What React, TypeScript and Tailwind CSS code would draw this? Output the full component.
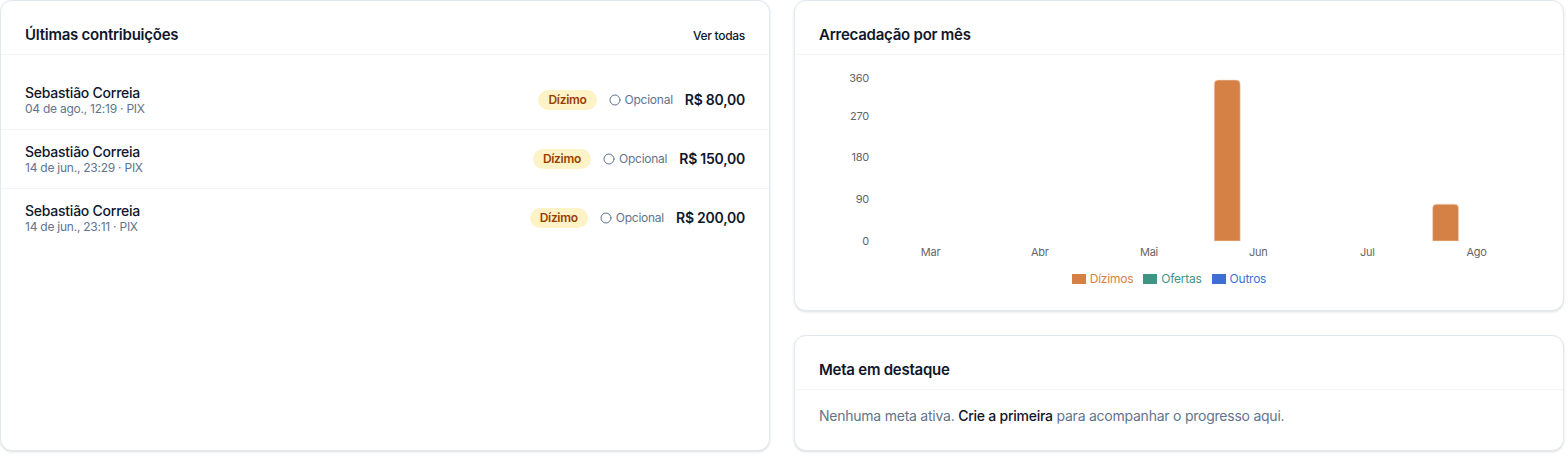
import { Circle } from 'lucide-react'

const FONT = { fontFamily: 'Inter, "Noto Sans", sans-serif' }

const contributions = [
  { name: 'Sebastião Correia', when: '04 de ago., 12:19 · PIX', amount: 'R$ 80,00' },
  { name: 'Sebastião Correia', when: '14 de jun., 23:29 · PIX', amount: 'R$ 150,00' },
  { name: 'Sebastião Correia', when: '14 de jun., 23:11 · PIX', amount: 'R$ 200,00' },
]

const months = ['Mar', 'Abr', 'Mai', 'Jun', 'Jul', 'Ago']
const dizimos = [0, 0, 0, 350, 0, 80]

const COLORS = { dizimos: '#d58044', ofertas: '#3f9484', outros: '#3f6fd5' }

// ─── Chart ────────────────────────────────────────────────────────────────────

const X0 = 81
const BAND = 109.2
const BASE = 186
const SCALE = 0.46

function barPath(x: number, w: number, top: number, r = 4) {
  return `M${x},${BASE} L${x},${top + r} Q${x},${top} ${x + r},${top} L${x + w - r},${top} Q${x + w},${top} ${x + w},${top + r} L${x + w},${BASE} Z`
}

function RevenueChart() {
  const ticks = [
    { v: 360, y: 24 },
    { v: 270, y: BASE - 270 * SCALE },
    { v: 180, y: BASE - 180 * SCALE },
    { v: 90, y: BASE - 90 * SCALE },
    { v: 0, y: BASE + 0.5 },
  ]
  return (
    <svg width="768" height="210" className="block">
      {ticks.map((t) => (
        <text key={t.v} x={74} y={t.y} textAnchor="end" dominantBaseline="middle" fontSize="11" fill="#666" style={FONT}>
          {t.v}
        </text>
      ))}
      {months.map((m, i) => {
        const cx = X0 + BAND * (i + 0.5)
        const v = dizimos[i]
        return (
          <g key={m}>
            {v > 0 && (
              <path d={barPath(cx - 44, 26, BASE - v * SCALE)} fill={COLORS.dizimos} stroke="#f6dcc8" strokeWidth="0.6" />
            )}
            <text x={cx} y={198} textAnchor="middle" dominantBaseline="middle" fontSize="11" fill="#666" style={FONT}>
              {m}
            </text>
          </g>
        )
      })}
    </svg>
  )
}

// ─── Main ─────────────────────────────────────────────────────────────────────

export default function App() {
  return (
    <div className="w-[1564px] h-[464px] bg-white tracking-[-0.015em]" style={FONT}>
      <div className="grid grid-cols-2 gap-6">
        {/* Últimas contribuições */}
        <div className="flex flex-col rounded-xl border border-slate-200 bg-white shadow-sm">
          <div className="flex items-baseline justify-between border-b border-slate-100 px-6 pt-[22px] pb-[7px]">
            <h2 className="text-[15px] font-semibold leading-6 text-slate-900">Últimas contribuições</h2>
            <span className="text-xs font-medium tracking-[-0.025em] text-slate-900">Ver todas</span>
          </div>
          <div className="pt-4">
            {contributions.map((c, i) => (
              <div
                key={i}
                className={`flex items-center justify-between px-6 py-3 ${i < contributions.length - 1 ? 'border-b border-slate-100' : ''}`}
              >
                <div className="flex flex-col">
                  <span className="text-sm font-medium leading-5 text-slate-900">{c.name}</span>
                  <span className="-mt-0.5 text-xs leading-4 text-slate-500">{c.when}</span>
                </div>
                <div className="flex items-center gap-3">
                  <span className="rounded-full bg-amber-100 px-2.5 py-0.5 text-xs font-semibold leading-4 tracking-[-0.025em] text-amber-800">
                    Dízimo
                  </span>
                  <span className="flex items-center gap-1 text-xs tracking-[-0.02em] text-slate-500">
                    <Circle size={12} className="text-slate-500" />
                    Opcional
                  </span>
                  <span className="text-sm font-semibold text-slate-900">{c.amount}</span>
                </div>
              </div>
            ))}
          </div>
        </div>

        <div className="flex flex-col gap-6">
          {/* Arrecadação por mês */}
          <div className="rounded-xl border border-slate-200 bg-white shadow-sm">
            <div className="border-b border-slate-100 px-6 pt-[22px] pb-[7px]">
              <h2 className="text-[15px] font-semibold leading-6 text-slate-900">Arrecadação por mês</h2>
            </div>
            <div className="pb-[23px]">
              <RevenueChart />
              <div className="mt-[6px] flex items-center justify-center gap-2.5 pr-5 text-xs leading-4">
                <span className="flex items-center gap-1" style={{ color: COLORS.dizimos }}>
                  <span className="h-[10px] w-[14px] bg-[#d58044]" />
                  Dízimos
                </span>
                <span className="flex items-center gap-1" style={{ color: COLORS.ofertas }}>
                  <span className="h-[10px] w-[14px] bg-[#3f9484]" />
                  Ofertas
                </span>
                <span className="flex items-center gap-1" style={{ color: COLORS.outros }}>
                  <span className="h-[10px] w-[14px] bg-[#3f6fd5]" />
                  Outros
                </span>
              </div>
            </div>
          </div>

          {/* Meta em destaque */}
          <div className="rounded-xl border border-slate-200 bg-white shadow-sm">
            <div className="border-b border-slate-100 px-6 pt-[22px] pb-[7px]">
              <h2 className="text-[15px] font-semibold leading-6 text-slate-900">Meta em destaque</h2>
            </div>
            <p className="px-6 pt-4 pb-6 text-sm leading-5 text-slate-500">
              Nenhuma meta ativa. <span className="font-medium text-slate-900">Crie a primeira</span> para acompanhar o
              progresso aqui.
            </p>
          </div>
        </div>
      </div>
    </div>
  )
}
